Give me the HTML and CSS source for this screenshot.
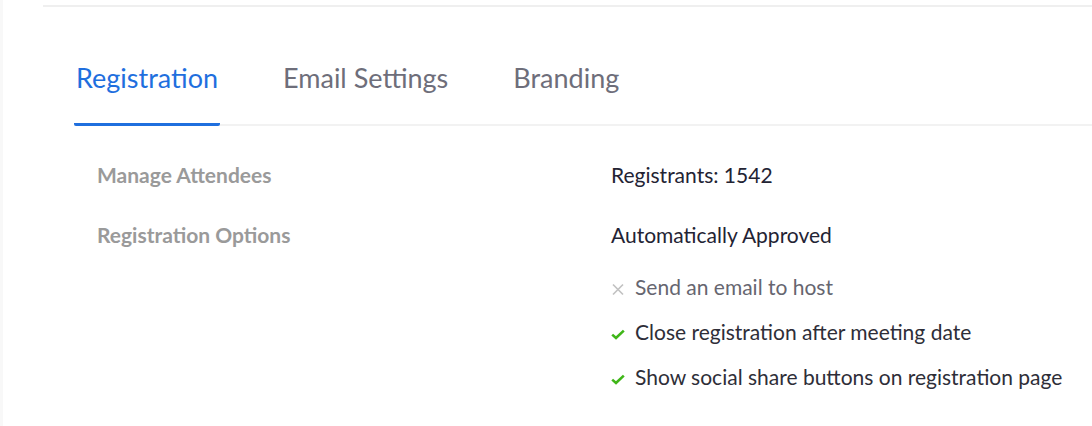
FILE: index.html
```html
<!DOCTYPE html>
<html>
<head>
<meta charset="utf-8">
<link rel="stylesheet" href="styles.css">
</head>
<body>
<div class="page">
  <div class="panel">
    <div class="tabs">
      <div class="tab active">Registration</div>
      <div class="tab">Email Settings</div>
      <div class="tab">Branding</div>
    </div>
    <div class="settings">
      <div class="label">Manage Attendees</div>
      <div class="value">Registrants: 1542</div>
      <div class="label">Registration Options</div>
      <div class="value">
        <div>Automatically Approved</div>
        <ul class="opts">
          <li class="off"><svg class="ico" viewBox="0 0 14 14"><path d="M2 2.5 L12 12.5 M12 2.5 L2 12.5" stroke="#c2c2c2" stroke-width="1.7" fill="none"/></svg>Send an email to host</li>
          <li><svg class="ico" viewBox="0 0 14 14"><path d="M1.2 7.6 L5 11 L12.8 3.6" stroke="#3fb618" stroke-width="2.6" fill="none" stroke-linejoin="miter"/></svg>Close registration after meeting date</li>
          <li><svg class="ico" viewBox="0 0 14 14"><path d="M1.2 7.6 L5 11 L12.8 3.6" stroke="#3fb618" stroke-width="2.6" fill="none" stroke-linejoin="miter"/></svg>Show social share buttons on registration page</li>
        </ul>
      </div>
    </div>
  </div>
</div>
</body>
</html>
```
FILE: styles.css
```css
html, body {
  margin: 0;
  padding: 0;
  background: #ffffff;
}
body {
  font-family: Lato, "Open Sans", sans-serif;
  width: 1092px;
  height: 426px;
  overflow: hidden;
}
.page {
  height: 426px;
  border-left: 3px solid #f8f8f8;
  box-sizing: border-box;
  padding-top: 5px;
  padding-left: 40px;
}
.panel {
  border-top: 2px solid #efefef;
}
.tabs {
  display: flex;
  gap: 61px;
  margin-top: 55px;
  margin-left: 31px;
  border-bottom: 2px solid #f2f2f2;
}
.tab {
  font-size: 27px;
  line-height: 32px;
  padding: 0 2px 29px;
  margin-bottom: -2px;
  border-bottom: 3px solid transparent;
  color: #6e6e7a;
}
.tab.active {
  color: #1f6fde;
  border-bottom-color: #1f6fde;
  border-radius: 2px;
}
.settings {
  display: grid;
  grid-template-columns: 514px 1fr;
  row-gap: 30px;
  margin-top: 34px;
  padding-left: 54px;
  font-size: 21px;
  line-height: 30px;
}
.label {
  font-weight: bold;
  color: #9a9a9a;
}
.value {
  color: #232333;
}
.opts {
  list-style: none;
  margin: 22px 0 0;
  padding: 0;
  display: flex;
  flex-direction: column;
  gap: 15px;
}
.opts li {
  display: flex;
  align-items: center;
  gap: 10px;
  color: #2e2e38;
}
.opts li.off {
  color: #666670;
}
.ico {
  width: 14px;
  height: 14px;
  margin-top: 4px;
}
```
